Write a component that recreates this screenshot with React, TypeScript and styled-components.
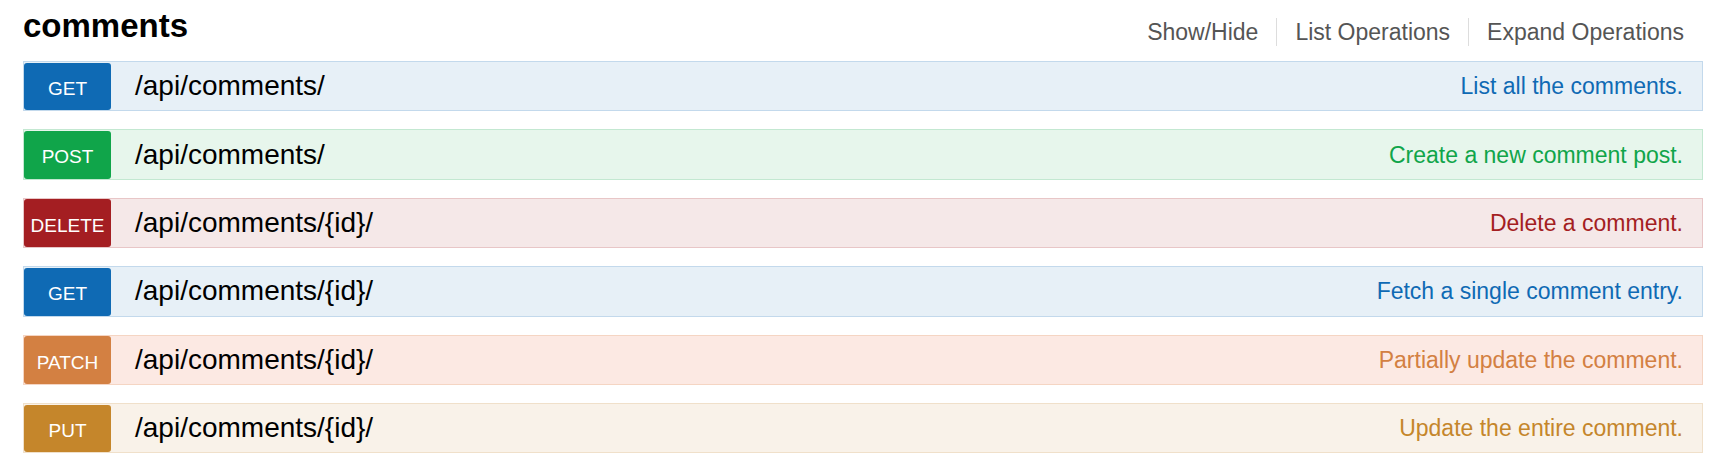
import React from "react";
import styled, { createGlobalStyle } from "styled-components";

type Method = "get" | "post" | "delete" | "patch" | "put";

// swagger classic palette
const palette: Record<Method, { main: string; bg: string; border: string }> = {
  get: { main: "#0f6ab4", bg: "#e7f0f7", border: "#c3d9ec" },
  post: { main: "#10a54a", bg: "#e7f6ec", border: "#c3e8d1" },
  delete: { main: "#a41e22", bg: "#f5e8e8", border: "#e8c6c7" },
  patch: { main: "#d38042", bg: "#fce9e3", border: "#f5d5c3" },
  put: { main: "#c5862b", bg: "#f9f2e9", border: "#f0e0ca" },
};

const GlobalStyle = createGlobalStyle`
  html, body {
    margin: 0;
    padding: 0;
    background: #ffffff;
  }
  body {
    font-family: "Liberation Sans", Arial, sans-serif;
    color: #000;
  }
`;

const Resource = styled.div`
  padding: 0 16px 0 23px;
`;

const Heading = styled.div`
  display: flex;
  justify-content: space-between;
  align-items: flex-start;
  height: 46px;
  margin-bottom: 15px;
`;

const Title = styled.h2`
  margin: 0;
  padding-top: 6px;
  font-size: 33px;
  line-height: 40px;
  font-weight: bold;
  color: #000;
`;

const Options = styled.ul`
  list-style: none;
  margin: 18px 0 0 0;
  padding: 0;
  display: flex;
`;

const Option = styled.li<{ $last?: boolean }>`
  padding: 0 ${(p) => (p.$last ? "19px" : "18px")} 0 18px;
  border-right: ${(p) => (p.$last ? "none" : "1px solid #dddddd")};
  font-size: 23px;
  line-height: 28px;
  color: #555555;
  cursor: pointer;
`;

const Endpoints = styled.ul`
  list-style: none;
  margin: 0;
  padding: 0;
`;

const Endpoint = styled.li<{ $method: Method }>`
  display: flex;
  align-items: center;
  height: 50.4px;
  box-sizing: border-box;
  margin-bottom: 18px;
  background: ${(p) => palette[p.$method].bg};
  border: 1px solid ${(p) => palette[p.$method].border};
`;

const Badge = styled.span<{ $method: Method }>`
  flex: 0 0 87px;
  align-self: stretch;
  display: flex;
  align-items: center;
  justify-content: center;
  box-sizing: border-box;
  padding-top: 5px;
  margin-top: 0.6px;
  background: ${(p) => palette[p.$method].main};
  color: #ffffff;
  border-radius: 3px;
  font-size: 19px;
`;

const Path = styled.span`
  flex: 1;
  padding-left: 24px;
  font-size: 28px;
  line-height: 48px;
  color: #000;
`;

const Description = styled.span<{ $method: Method }>`
  padding-right: 19px;
  font-size: 23px;
  line-height: 48px;
  color: ${(p) => palette[p.$method].main};
`;

const operations: { method: Method; path: string; summary: string }[] = [
  { method: "get", path: "/api/comments/", summary: "List all the comments." },
  { method: "post", path: "/api/comments/", summary: "Create a new comment post." },
  { method: "delete", path: "/api/comments/{id}/", summary: "Delete a comment." },
  { method: "get", path: "/api/comments/{id}/", summary: "Fetch a single comment entry." },
  { method: "patch", path: "/api/comments/{id}/", summary: "Partially update the comment." },
  { method: "put", path: "/api/comments/{id}/", summary: "Update the entire comment." },
];

const App = () => {
  return (
    <>
      <GlobalStyle />
      <Resource>
        <Heading>
          <Title>comments</Title>
          <Options>
            <Option>Show/Hide</Option>
            <Option>List Operations</Option>
            <Option $last>Expand Operations</Option>
          </Options>
        </Heading>
        <Endpoints>
          {operations.map((op, i) => (
            <Endpoint key={i} $method={op.method}>
              <Badge $method={op.method}>{op.method.toUpperCase()}</Badge>
              <Path>{op.path}</Path>
              <Description $method={op.method}>{op.summary}</Description>
            </Endpoint>
          ))}
        </Endpoints>
      </Resource>
    </>
  );
};

export default App;
